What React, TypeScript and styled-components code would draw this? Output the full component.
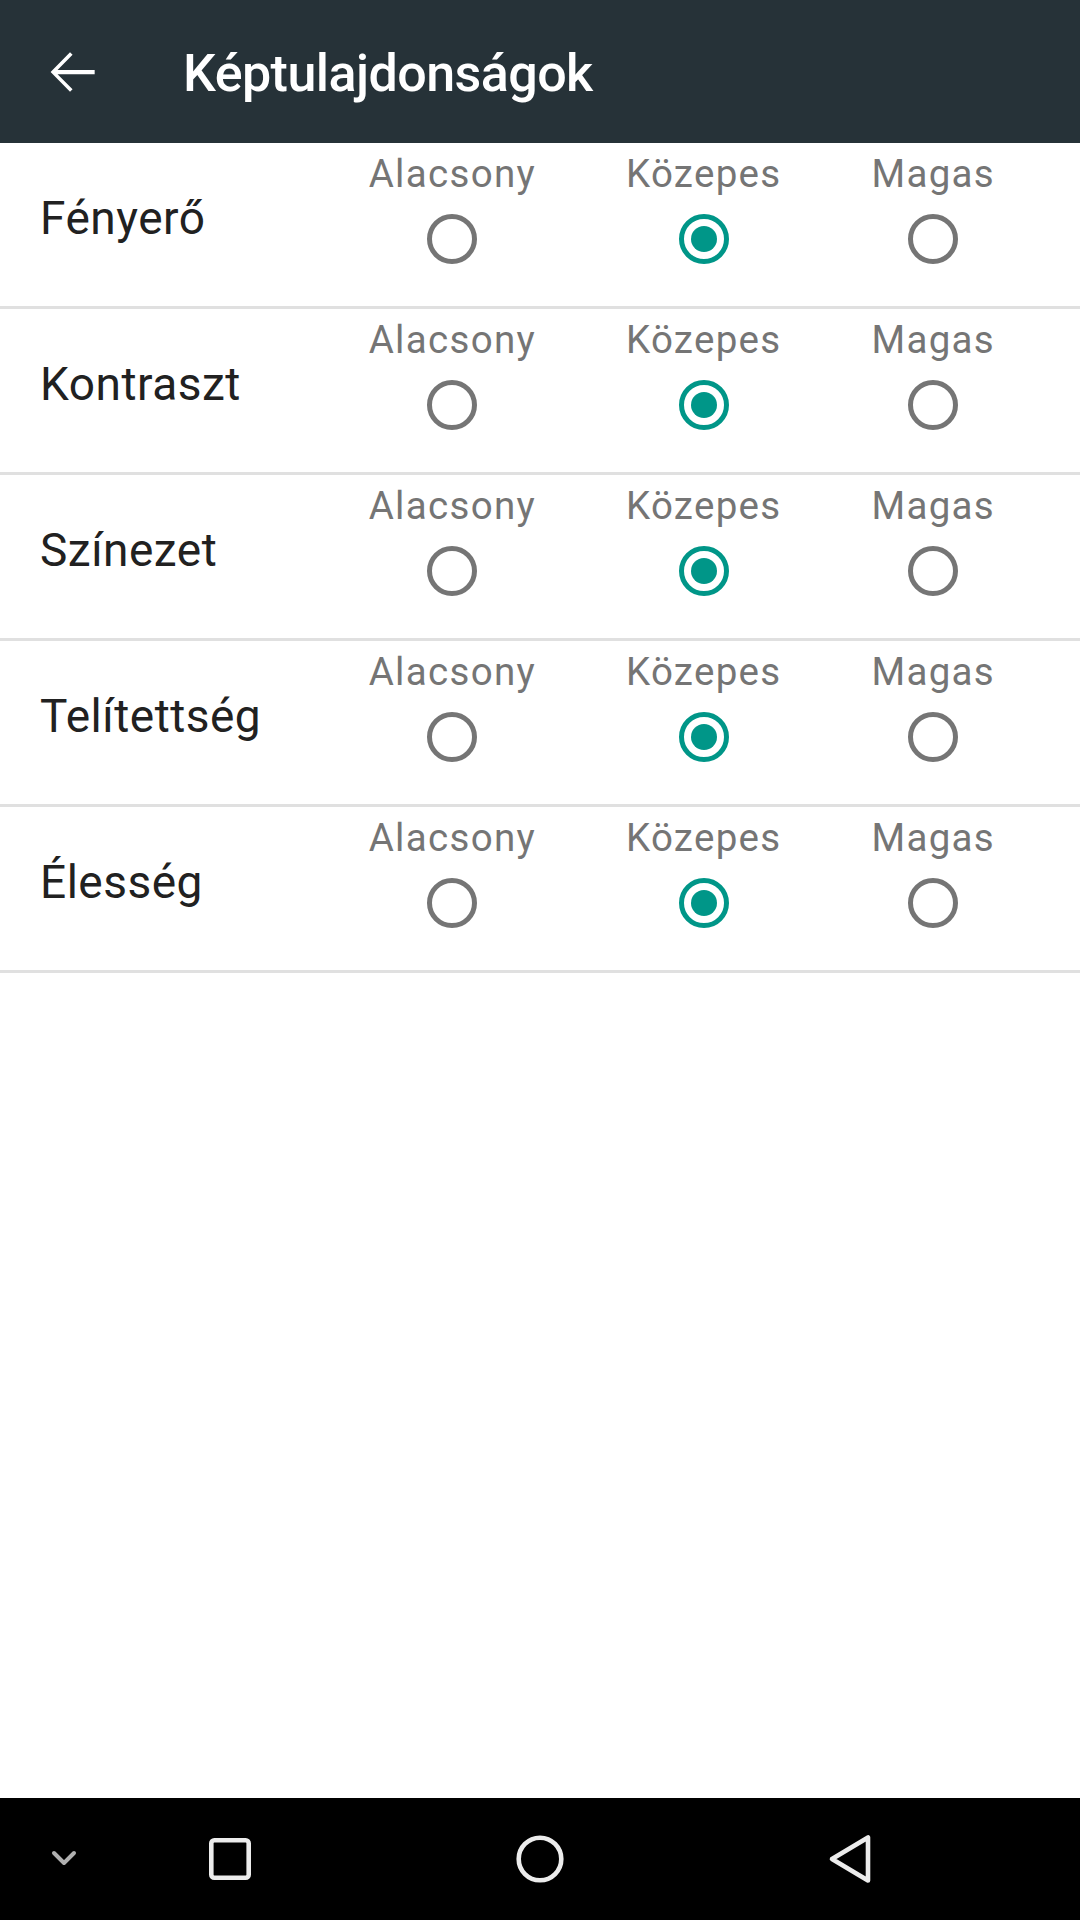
import React from "react";
import styled, { createGlobalStyle } from "styled-components";

const GlobalStyle = createGlobalStyle`
  html, body {
    margin: 0;
    padding: 0;
    background: #ffffff;
    font-family: Roboto, "Noto Sans", "Liberation Sans", sans-serif;
  }
  * { box-sizing: border-box; }
`;

const Screen = styled.div`
  width: 1080px;
  height: 1920px;
  display: flex;
  flex-direction: column;
  background: #ffffff;
  overflow: hidden;
`;

const Toolbar = styled.header`
  height: 143px;
  flex: none;
  background: #263238;
  display: flex;
  align-items: center;
  padding-left: 38px;
  gap: 77px;
`;

const BackButton = styled.div`
  width: 68px;
  height: 68px;
  display: flex;
  align-items: center;
  justify-content: center;
`;

const Title = styled.h1`
  margin: 0;
  padding-top: 3px;
  font-family: Roboto, "Noto Sans", sans-serif;
  font-weight: 500;
  font-size: 52px;
  line-height: 61px;
  letter-spacing: -0.55px;
  color: #ffffff;
`;

const List = styled.div`
  display: flex;
  flex-direction: column;
`;

const Row = styled.div`
  height: 166px;
  display: flex;
  align-items: flex-start;
  border-bottom: 3px solid #e0e0e0;
`;

const RowLabel = styled.div`
  padding-left: 40px;
  padding-top: 48px;
  font-size: 46px;
  line-height: 54px;
  letter-spacing: 0.5px;
  color: #212121;
  font-weight: 400;
`;

const Options = styled.div`
  margin-left: auto;
  padding-right: 85px;
  padding-top: 8px;
  display: flex;
  gap: 90px;
`;

const Option = styled.div`
  display: flex;
  flex-direction: column;
  align-items: center;
`;

const OptionText = styled.div`
  font-size: 38.5px;
  line-height: 45px;
  letter-spacing: 1.3px;
  color: #757575;
  white-space: nowrap;
`;

const Radio = styled.div<{ $checked: boolean }>`
  margin-top: 18px;
  width: 50px;
  height: 50px;
  border-radius: 50%;
  border: 5px solid ${(p) => (p.$checked ? "#009688" : "#757575")};
  display: flex;
  align-items: center;
  justify-content: center;
`;

const RadioDot = styled.div`
  width: 26px;
  height: 26px;
  border-radius: 50%;
  background: #009688;
`;

const Spacer = styled.div`
  flex: 1;
`;

const NavBar = styled.nav`
  height: 122px;
  flex: none;
  background: #000000;
  display: grid;
  grid-template-columns: 128px 204px 416px 204px 128px;
  align-items: center;
`;

const NavSlot = styled.div`
  display: flex;
  align-items: center;
  justify-content: center;
`;

const rows = ["Fényerő", "Kontraszt", "Színezet", "Telítettség", "Élesség"];
const levels = ["Alacsony", "Közepes", "Magas"];

export default function App() {
  return (
    <>
      <GlobalStyle />
      <Screen>
        <Toolbar>
          <BackButton>
            <svg width="68" height="68" viewBox="0 0 24 24">
              <path
                fill="#ffffff"
                d="M20 11.25H6.9l5.3-5.3-.9-.9L4.45 12l6.85 6.95.9-.9-5.3-5.3H20z"
              />
            </svg>
          </BackButton>
          <Title>Képtulajdonságok</Title>
        </Toolbar>
        <List>
          {rows.map((r) => (
            <Row key={r}>
              <RowLabel>{r}</RowLabel>
              <Options>
                {levels.map((l, i) => (
                  <Option key={l}>
                    <OptionText>{l}</OptionText>
                    <Radio $checked={i === 1}>{i === 1 && <RadioDot />}</Radio>
                  </Option>
                ))}
              </Options>
            </Row>
          ))}
        </List>
        <Spacer />
        <NavBar>
          <NavSlot>
            <svg width="28" height="20" viewBox="0 0 28 20">
              <polyline
                points="4,4 14,14 24,4"
                fill="none"
                stroke="#b0b0b0"
                strokeWidth="4"
                strokeLinecap="round"
                strokeLinejoin="round"
              />
            </svg>
          </NavSlot>
          <NavSlot>
            <svg width="44" height="44" viewBox="0 0 44 44">
              <rect
                x="3.3"
                y="3.3"
                width="37.4"
                height="37.4"
                rx="3"
                fill="none"
                stroke="#ececec"
                strokeWidth="4.6"
              />
            </svg>
          </NavSlot>
          <NavSlot>
            <svg width="48" height="48" viewBox="0 0 48 48">
              <circle cx="24" cy="24" r="21.3" fill="none" stroke="#ececec" strokeWidth="4.6" />
            </svg>
          </NavSlot>
          <NavSlot>
            <svg width="44" height="50" viewBox="0 0 44 50">
              <polygon
                points="4,25 40,3.5 40,46.5"
                fill="none"
                stroke="#ececec"
                strokeWidth="4.6"
                strokeLinejoin="round"
              />
            </svg>
          </NavSlot>
          <NavSlot />
        </NavBar>
      </Screen>
    </>
  );
}
